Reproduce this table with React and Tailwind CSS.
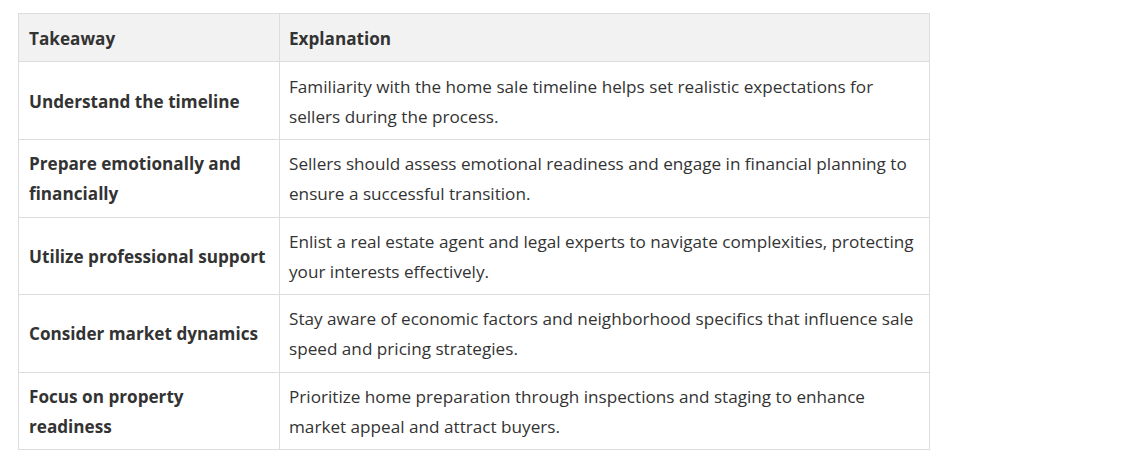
export default function App() {
  const rows = [
    [["Understand the timeline"], ["Familiarity with the home sale timeline helps set realistic expectations for", "sellers during the process."]],
    [["Prepare emotionally and", "financially"], ["Sellers should assess emotional readiness and engage in financial planning to", "ensure a successful transition."]],
    [["Utilize professional support"], ["Enlist a real estate agent and legal experts to navigate complexities, protecting", "your interests effectively."]],
    [["Consider market dynamics"], ["Stay aware of economic factors and neighborhood specifics that influence sale", "speed and pricing strategies."]],
    [["Focus on property", "readiness"], ["Prioritize home preparation through inspections and staging to enhance", "market appeal and attract buyers."]],
  ];
  const lines = (arr) =>
    arr.map((l, j) => (
      <span key={j} className="block whitespace-nowrap">
        {l}
      </span>
    ));
  return (
    <div className="w-[1128px] h-[465px] bg-white pt-[13px] pl-[18px]" style={{ fontFamily: '"Open Sans", sans-serif' }}>
      <table className="border-collapse text-[17.15px] leading-[30px] text-[#333333] w-[911px] table-fixed">
        <colgroup>
          <col className="w-[261px]" />
          <col className="w-[650px]" />
        </colgroup>
        <thead>
          <tr className="bg-[#f2f2f2] h-[48px]">
            <th className="border border-[#dddddd] pl-[10px] pr-[10px] pt-[3px] pb-0 text-left font-bold align-middle">Takeaway</th>
            <th className="border border-[#dddddd] pl-[9px] pr-[10px] pt-[3px] pb-0 text-left font-bold align-middle">Explanation</th>
          </tr>
        </thead>
        <tbody>
          {rows.map(([a, b], i) => (
            <tr key={i} className={i === 0 ? "h-[78px]" : "h-[77.5px]"}>
              <td className="border border-[#dddddd] pl-[10px] pr-[10px] pt-[9px] pb-[7px] font-bold align-middle">{lines(a)}</td>
              <td className="border border-[#dddddd] pl-[9px] pr-[10px] pt-[9px] pb-[7px] align-middle">{lines(b)}</td>
            </tr>
          ))}
        </tbody>
      </table>
    </div>
  );
}
